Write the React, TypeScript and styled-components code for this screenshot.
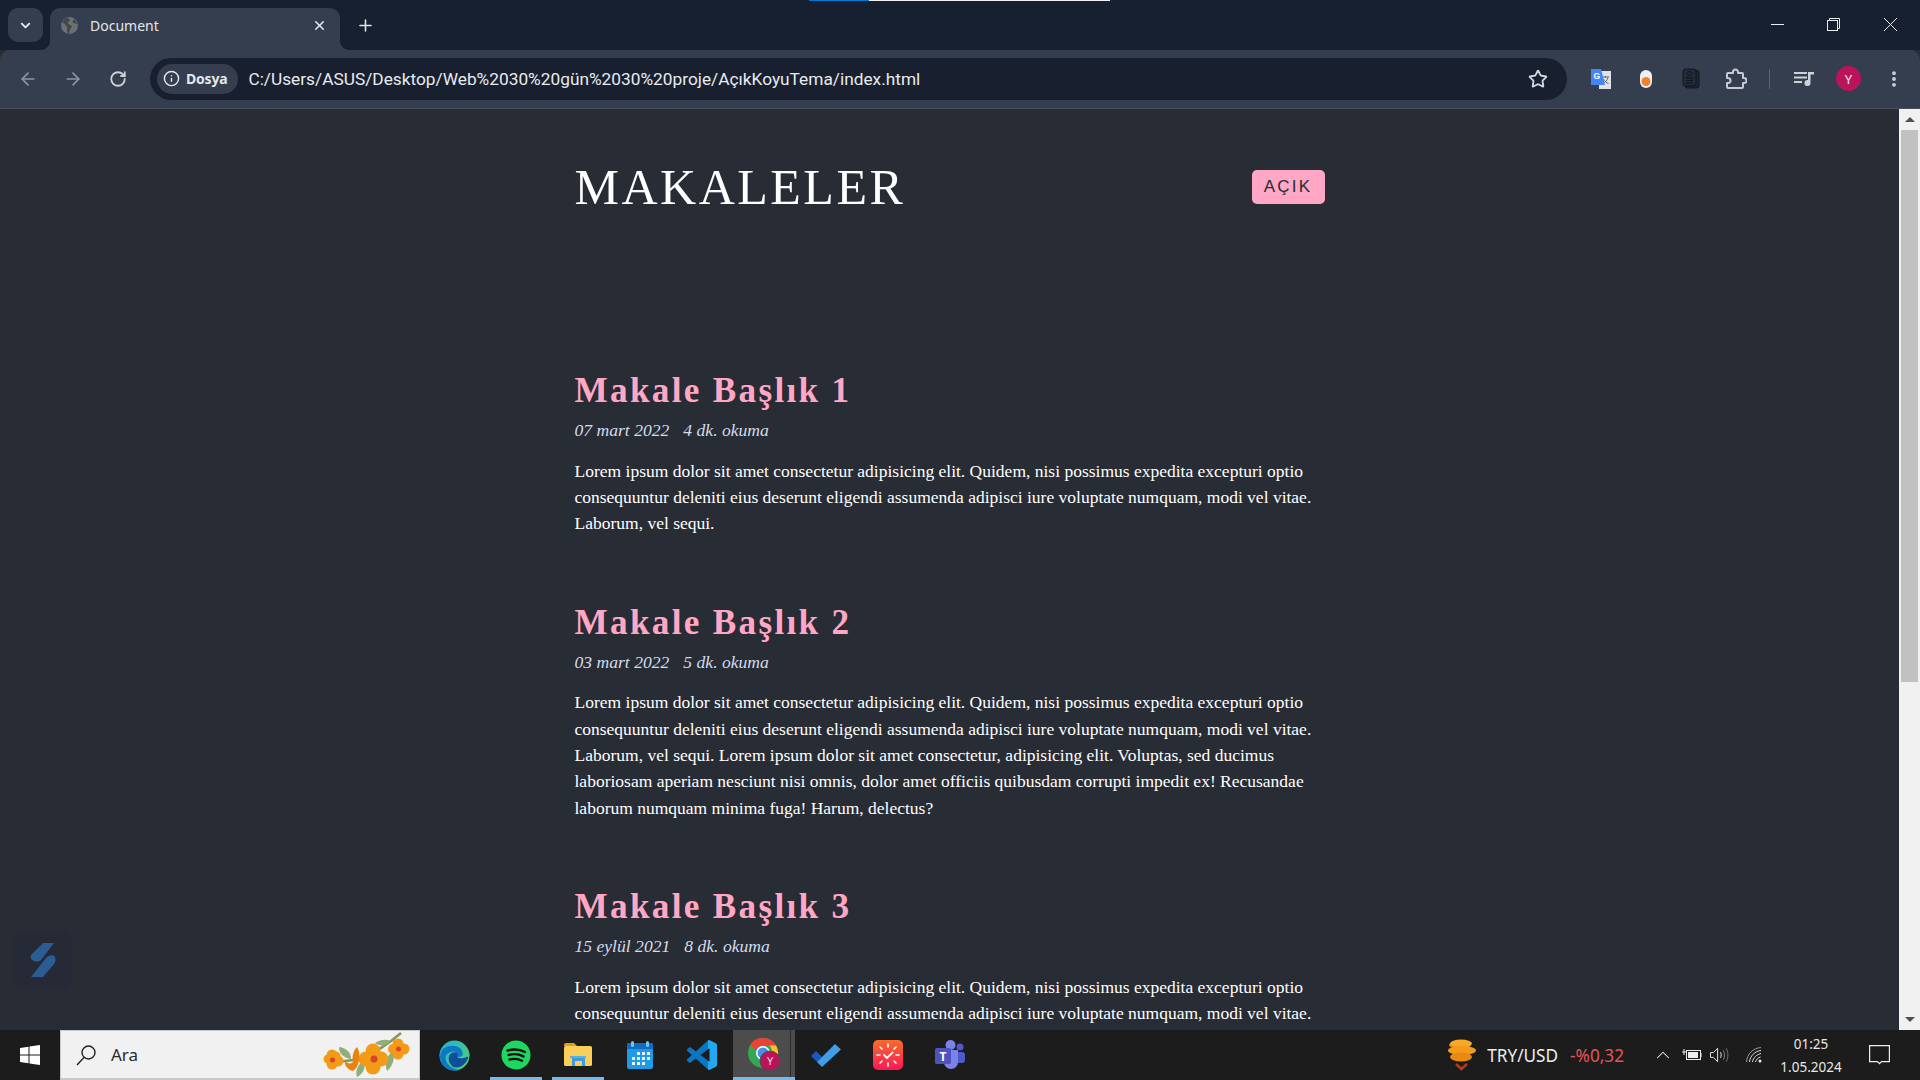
import React from "react";
import styled, { createGlobalStyle } from "styled-components";
import { ArrowLeft, ArrowRight, RotateCw, Star, Plus, X, ChevronDown, ChevronUp, Info, EllipsisVertical } from "lucide-react";

const GlobalStyle = createGlobalStyle`
  html, body { margin: 0; padding: 0; height: 100%; overflow: hidden; background: #282c35; }
  #root { height: 100%; }
  * { box-sizing: border-box; }
`;

const ui = `"Noto Sans", "Open Sans", sans-serif`;
const serif = `"Liberation Serif", "Times New Roman", serif`;

const Screen = styled.div`
  position: relative;
  display: flex;
  flex-direction: column;
  height: 1080px;
  overflow: hidden;
`;

const LoadBar = styled.div`
  position: absolute;
  top: 0;
  left: 809px;
  width: 301px;
  height: 1px;
  background: linear-gradient(90deg, #0078d4 0 60px, #f2f2f2 60px);
`;

const TabStrip = styled.div`
  display: flex;
  align-items: flex-start;
  height: 50px;
  flex: none;
  padding-top: 8px;
  background: #172030;
  font-family: ${ui};
`;

const TabSearch = styled.div`
  display: flex;
  align-items: center;
  justify-content: center;
  width: 35px;
  height: 34px;
  margin-left: 8px;
  border-radius: 10px;
  background: #353e4e;
  color: #e6e9ee;
`;

const Tab = styled.div`
  position: relative;
  display: flex;
  align-items: center;
  width: 290px;
  height: 42px;
  margin-left: 7px;
  padding: 0 13px 7px 11px;
  border-radius: 10px 10px 0 0;
  background: #353e4e;
  color: #e3e6ea;
  font-size: 14px;

  &::before, &::after {
    content: "";
    position: absolute;
    bottom: 0;
    width: 10px;
    height: 10px;
  }
  &::before { left: -10px; background: radial-gradient(circle at 0 0, transparent 10px, #353e4e 10.5px); }
  &::after { right: -10px; background: radial-gradient(circle at 100% 0, transparent 10px, #353e4e 10.5px); }
`;

const TabTitle = styled.span`
  flex: 1;
  margin-left: 12px;
`;

const NewTab = styled.div`
  display: flex;
  align-items: center;
  justify-content: center;
  width: 36px;
  height: 34px;
  margin-left: 7px;
  color: #dfe3e8;
`;

const Spacer = styled.div`
  flex: 1;
`;

const WindowButton = styled.div<{ $width: number }>`
  display: flex;
  align-items: center;
  justify-content: center;
  width: ${(p) => p.$width}px;
  height: 34px;
  margin-top: -1px;
  color: #e9ebee;
`;

const Toolbar = styled.div`
  display: flex;
  align-items: center;
  height: 59px;
  flex: none;
  padding: 0 4px 1px 5px;
  border-radius: 10px 10px 0 0;
  border-bottom: 1px solid #4b4f57;
  background: #353e4e;
  font-family: ${ui};
`;

const ToolSlot = styled.div<{ $muted?: boolean }>`
  display: flex;
  align-items: center;
  justify-content: center;
  width: 45px;
  height: 40px;
  flex: none;
  color: ${(p) => (p.$muted ? "#8d95a2" : "#cdd2da")};
`;

const Omnibox = styled.div`
  display: flex;
  align-items: center;
  flex: 1;
  height: 42px;
  margin: 0 11px 0 10px;
  padding: 0 19px 0 7px;
  border-radius: 21px;
  background: #18202f;
  color: #d5d8dd;
`;

const SiteChip = styled.div`
  display: flex;
  align-items: center;
  gap: 6px;
  height: 30px;
  padding: 0 11px 0 6px;
  border-radius: 15px;
  background: #353e4e;
  color: #e4e7eb;
  font-size: 14px;
  font-weight: 700;
  letter-spacing: -0.2px;
`;

const Url = styled.span`
  flex: 1;
  margin-left: 10px;
  color: #e8eaee;
  font-family: Roboto, "Noto Sans", sans-serif;
  font-size: 17.3px;
  white-space: nowrap;
`;

const ToolDivider = styled.div`
  width: 1px;
  height: 20px;
  margin: 0 11px;
  background: #5a6270;
`;

const Avatar = styled.div`
  display: flex;
  align-items: center;
  justify-content: center;
  width: 25px;
  height: 25px;
  border-radius: 50%;
  background: #b9135a;
  color: #f7e6ee;
  font-size: 13px;
`;

const Viewport = styled.div`
  display: flex;
  flex: 1;
  min-height: 0;
`;

const Page = styled.main`
  position: relative;
  flex: 1;
  overflow: hidden;
  background: #282c35;
  font-family: ${serif};
`;

const Container = styled.div`
  width: 750px;
  margin: 0 auto;
`;

const Header = styled.header`
  display: flex;
  align-items: center;
  justify-content: space-between;
  height: 155px;
  margin-bottom: 107px;
`;

const Title = styled.h1`
  margin: 0;
  color: #fff;
  font-size: 50px;
  font-weight: 400;
  letter-spacing: 2.5px;
`;

const ThemeButton = styled.button`
  width: 73px;
  height: 34px;
  padding: 0;
  border: none;
  border-radius: 5px;
  background: #ffa7c4;
  color: #282c35;
  font-family: "Liberation Sans", Arial, sans-serif;
  font-size: 17px;
  letter-spacing: 2.2px;
`;

const Article = styled.article`
  margin-bottom: 66px;
`;

const ArticleTitle = styled.h2`
  margin: 0 0 10px;
  color: #ffa7c4;
  font-size: 35.2px;
  font-weight: 700;
  line-height: 40px;
  letter-spacing: 2.3px;
`;

const Meta = styled.div`
  display: flex;
  gap: 14px;
  margin-bottom: 17px;
  color: #d3dcec;
  font-size: 17.6px;
  font-style: italic;
  line-height: 19.500px;
`;

const Body = styled.p`
  margin: 0;
  color: #fff;
  font-size: 17.5px;
  line-height: 26.4px;
`;

const FloatingBadge = styled.div`
  position: absolute;
  left: 13px;
  bottom: 40px;
  display: flex;
  align-items: center;
  justify-content: center;
  width: 60px;
  height: 60px;
  border-radius: 14px;
  background: #252a36;
`;

const ScrollTrack = styled.div`
  display: flex;
  flex-direction: column;
  align-items: center;
  width: 21px;
  flex: none;
  background: #f1f1f1;
`;

const ScrollArrow = styled.div<{ $down?: boolean }>`
  display: flex;
  align-items: center;
  justify-content: center;
  width: 100%;
  height: 21px;
  flex: none;
  &::before {
    content: "";
    border-left: 5px solid transparent;
    border-right: 5px solid transparent;
    ${(p) => (p.$down ? "border-top: 5px solid #505050;" : "border-bottom: 5px solid #505050;")}
  }
`;

const ScrollThumb = styled.div`
  width: 17px;
  height: 552px;
  background: #c1c1c1;
`;

const ScrollRest = styled.div`
  flex: 1;
`;

const Taskbar = styled.footer`
  display: flex;
  align-items: stretch;
  height: 50px;
  flex: none;
  background: #1c1c1c;
  font-family: ${ui};
`;

const StartButton = styled.div`
  display: flex;
  align-items: center;
  justify-content: center;
  width: 60px;
`;

const SearchBox = styled.div`
  display: flex;
  align-items: center;
  width: 360px;
  padding: 0 8px 0 14px;
  border: 1px solid #c8c8c8;
  border-bottom-width: 2px;
  background: #f1f1f1;
  color: #2a2a2a;
  font-size: 17px;
`;

const SearchLabel = styled.span`
  flex: 1;
  margin-left: 14px;
`;

const TaskIcons = styled.div`
  display: flex;
  margin-left: 3px;
`;

const TaskSlot = styled.div<{ $active?: boolean; $open?: boolean }>`
  position: relative;
  display: flex;
  align-items: center;
  justify-content: center;
  width: 62px;
  background: ${(p) => (p.$active ? "#4c4c4c" : "transparent")};

  &::after {
    content: "";
    display: ${(p) => (p.$open ? "block" : "none")};
    position: absolute;
    left: ${(p) => (p.$active ? "0" : "5px")};
    right: ${(p) => (p.$active ? "0" : "5px")};
    bottom: 0;
    height: 3px;
    background: #76b9ed;
  }
`;

const StackEdge = styled.div`
  position: absolute;
  top: 0;
  bottom: 0;
  right: 4px;
  width: 1px;
  background: #2a2a2a;
`;

const Tray = styled.div`
  display: flex;
  align-items: center;
  margin-left: auto;
  color: #f0f0f0;
`;

const Ticker = styled.span<{ $loss?: boolean }>`
  margin-left: ${(p) => (p.$loss ? "12px" : "10px")};
  margin-right: ${(p) => (p.$loss ? "28px" : "0")};
  color: ${(p) => (p.$loss ? "#e2555b" : "#ececec")};
  font-size: 17.2px;
`;

const TrayIcon = styled.div<{ $width: number }>`
  display: flex;
  align-items: center;
  justify-content: center;
  width: ${(p) => p.$width}px;
  height: 100%;
  flex: none;
`;

const Clock = styled.div`
  display: flex;
  flex-direction: column;
  align-items: center;
  gap: 3px;
  width: 66px;
  font-size: 13.5px;
  line-height: 20px;
  color: #e8e8e8;
  white-space: nowrap;
`;

const ShowDesktop = styled.div`
  width: 1px;
  margin: 0 5px 0 0;
  background: #7a7a7a;
`;

const lorem1 =
  "Lorem ipsum dolor sit amet consectetur adipisicing elit. Quidem, nisi possimus expedita excepturi optio consequuntur deleniti eius deserunt eligendi assumenda adipisci iure voluptate numquam, modi vel vitae. Laborum, vel sequi.";
const lorem2 =
  lorem1 +
  " Lorem ipsum dolor sit amet consectetur, adipisicing elit. Voluptas, sed ducimus laboriosam aperiam nesciunt nisi omnis, dolor amet officiis quibusdam corrupti impedit ex! Recusandae laborum numquam minima fuga! Harum, delectus?";

const articles = [
  { title: "Makale Başlık 1", date: "07 mart 2022", read: "4 dk. okuma", body: lorem1 },
  { title: "Makale Başlık 2", date: "03 mart 2022", read: "5 dk. okuma", body: lorem2 },
  { title: "Makale Başlık 3", date: "15 eylül 2021", read: "8 dk. okuma", body: lorem1 },
];

const GlobeIcon = () => (
  <svg width="17" height="17" viewBox="0 0 16 16">
    <circle cx="8" cy="8" r="8" fill="#6d7074" />
    <path d="M6 .4C4 1 2 2.6 1 5c1 1 2.5 1 3 2.4.3 1.2 1.6 1 1.8 2.4.2 1.4-.4 2.8.4 5.8l1.6.2C7.5 13 9.5 11 10 9.5 10.500 8 8 7 7 6.500 6 6 6.500 4.500 8 4c1-.500.200-2.500-2-3.600zM12 2c-1 1-1.600 2.500-.5 3.500 1 .8 2.500.5 3.800 1.500C15 5 14 3.200 12 2z" fill="#43474d" />
  </svg>
);

const MinimizeIcon = () => (
  <svg width="13" height="13" viewBox="0 0 13 13" stroke="currentColor" strokeWidth="1">
    <path d="M0 6.500h13" />
  </svg>
);

const RestoreIcon = () => (
  <svg width="13" height="13" viewBox="0 0 13 13" fill="none" stroke="currentColor" strokeWidth="1">
    <rect x="0.5" y="2.500" width="10" height="10" />
    <path d="M2.500 2.500V.5h10v10h-2" />
  </svg>
);

const CloseIcon = () => (
  <svg width="13" height="13" viewBox="0 0 13 13" stroke="currentColor" strokeWidth="1" fill="none">
    <path d="M0 0l13 13M13 0L0 13" />
  </svg>
);

const TranslateIcon = () => (
  <svg width="22" height="22" viewBox="0 0 22 22">
    <path d="M9 3h12v18H9z" fill="#dfe3e8" />
    <path d="M12 9h7M15.500 8v1.500M18 9.500c-.800 3-3 5-5.500 6M13.500 11c.800 2 2.500 3.500 5 4.500" stroke="#5f6670" strokeWidth="1" fill="none" />
    <path d="M1 1h10l4 16H1z" fill="#4285f4" />
    <text x="3.500" y="11" fontSize="8.500" fontWeight="700" fill="#fff" fontFamily="Liberation Sans, sans-serif">G</text>
  </svg>
);

const ToggleIcon = () => (
  <svg width="14" height="20" viewBox="0 0 14 20">
    <rect x="1" y="1" width="12" height="18" rx="6" fill="#eef0f2" />
    <circle cx="7" cy="12.500" r="4.500" fill="#f3812a" />
  </svg>
);

const NotebookIcon = () => (
  <svg width="18" height="21" viewBox="0 0 18 21">
    <rect x="3" y="2" width="14" height="18" rx="2.500" fill="#1d2430" stroke="#12161e" />
    <rect x="1" y="1" width="13" height="17" rx="2.500" fill="#232a38" stroke="#12161e" />
    <circle cx="7.500" cy="5.500" r="2" fill="none" stroke="#10141c" />
    <path d="M4 10h7M4 12.500h7M4 15h7" stroke="#10141c" />
  </svg>
);

const ExtensionIcon = () => (
  <svg width="22" height="22" viewBox="0 0 22 22" fill="none" stroke="#c5cad3" strokeWidth="2" strokeLinejoin="round">
    <path d="M3 5h5V4a2.500 2.500 0 0 1 5 0v1h4a1 1 0 0 1 1 1v4h1a2.500 2.500 0 0 1 0 5h-1v4a1 1 0 0 1-1 1H3a1 1 0 0 1-1-1v-4h1a2.500 2.500 0 0 0 0-5H2V6a1 1 0 0 1 1-1z" />
  </svg>
);

const QueueIcon = () => (
  <svg width="20" height="16" viewBox="0 0 20 16" fill="#cdd2da">
    <path d="M0 1h13v2H0zM0 5.500h13v2H0zM0 10h8v2H0z" />
    <path d="M14 1h6v2.500h-3.500V12a3 3 0 1 1-2.500-2.900z" />
  </svg>
);

const WindowsIcon = () => (
  <svg width="20" height="20" viewBox="0 0 20 20" fill="#fff">
    <path d="M0 3l8.500-1.200v7.700H0zM9.500 1.600L20 0v9.500H9.500zM0 10.500h8.500v7.700L0 17zM9.500 10.500H20V20L9.500 18.400z" />
  </svg>
);

const LensIcon = () => (
  <svg width="22" height="22" viewBox="0 0 22 22" fill="none" stroke="#222" strokeWidth="1.400">
    <circle cx="13.500" cy="8.500" r="6.500" />
    <path d="M9 13.500L2 21" />
  </svg>
);

const FlowersIcon = () => (
  <svg width="88" height="48" viewBox="0 0 88 48">
    <path d="M8 30C30 32 50 26 78 2" stroke="#7d9a62" strokeWidth="2.500" fill="none" />
    <path d="M16 16c8 1 12 6 12 12-7-1-12-5-12-12zM34 46c-2-7 1-13 7-16 2 7-1 13-7 16zM52 12c6-4 11-4 16-2-5 5-11 6-16 2zM64 40c-3-8 0-16 6-20 2 7 0 15-6 20z" fill="#8fae78" />
    <g fill="#f39a16">
      <circle cx="9" cy="24" r="5.500" /><circle cx="15" cy="30" r="5.500" /><circle cx="9" cy="33" r="5.500" /><circle cx="5" cy="28" r="4.500" /><circle cx="13" cy="25" r="4.500" />
      <circle cx="50" cy="20" r="7.500" /><circle cx="58" cy="28" r="7.500" /><circle cx="50" cy="36" r="7.500" /><circle cx="43" cy="28" r="7.500" />
      <circle cx="75" cy="13" r="5.500" /><circle cx="81" cy="18" r="5.500" /><circle cx="75" cy="23" r="5.500" /><circle cx="70" cy="18" r="5" />
    </g>
    <path d="M30 40c-5-1-9-6-8-10 3 3 6 3 8 1-1-5 0-11 4-15 4 6 3 20-4 24z" fill="#e9830e" />
    <circle cx="9.500" cy="29" r="2.500" fill="#d9442c" />
    <circle cx="51" cy="28" r="3.500" fill="#d9442c" />
    <circle cx="75.500" cy="18" r="2.500" fill="#d9442c" />
  </svg>
);

const EdgeIcon = () => (
  <svg width="31" height="31" viewBox="0 0 32 32">
    <defs>
      <linearGradient id="edgeTop" x1="0" y1="0" x2="1" y2="1">
        <stop offset="0" stopColor="#1fb2d6" />
        <stop offset="1" stopColor="#58d36a" />
      </linearGradient>
    </defs>
    <circle cx="16" cy="16" r="15.500" fill="url(#edgeTop)" />
    <path d="M1 18C1 9 8 6 14 6c6 0 11 4 10.500 9-.2 2-3 3-6 2.500 1-3-1-6-5-5.500C8 12.600 5 17 8 23c2 4 8 8 14 8C12 34 2 28 1 18z" fill="#0f76c8" />
    <path d="M10 19c0-4 3-6 6-6 3 0 4 2 2.500 4.500 2 1.500 6 2 10 0 1-.5 2-.5 1.500 1-2 6-7 10-13 10-4-1-7-5-7-9.500z" fill="#0d4f9a" />
  </svg>
);

const SpotifyIcon = () => (
  <svg width="30" height="30" viewBox="0 0 30 30">
    <circle cx="15" cy="15" r="14.500" fill="#1ed760" />
    <path d="M6.500 10.500c6-1.700 12.500-1.200 17.500 1.500M7.500 15c5-1.400 10.500-1 15 1.400M8.500 19.500c4.500-1.100 9-.8 12.500 1.200" stroke="#111" strokeWidth="2.400" strokeLinecap="round" fill="none" />
  </svg>
);

const FolderIcon = () => (
  <svg width="28" height="24" viewBox="0 0 28 24">
    <path d="M0 2a2 2 0 0 1 2-2h8l3 3H0z" fill="#e0a013" />
    <rect y="3" width="28" height="20" rx="1.500" fill="#f9cf5a" />
    <path d="M8 14h13v9h-3v-5h-7v5H8z" fill="#3f9ae0" />
    <path d="M6 13h16v2H6z" fill="#57aef0" />
  </svg>
);

const CalendarIcon = () => (
  <svg width="26" height="28" viewBox="0 0 26 28">
    <rect y="2" width="26" height="26" rx="2" fill="#1e9ae8" />
    <path d="M0 4a2 2 0 0 1 2-2h22a2 2 0 0 1 2 2v4H0z" fill="#0f6cc0" />
    <rect x="4" y="0" width="3" height="6" rx="1.500" fill="#6cc8f5" />
    <rect x="19" y="0" width="3" height="6" rx="1.500" fill="#6cc8f5" />
    <g fill="#e8f5fd">
      <rect x="10" y="11" width="3" height="3" /><rect x="15" y="11" width="3" height="3" /><rect x="20" y="11" width="3" height="3" />
      <rect x="5" y="16" width="3" height="3" /><rect x="10" y="16" width="3" height="3" /><rect x="15" y="16" width="3" height="3" /><rect x="20" y="16" width="3" height="3" />
      <rect x="5" y="21" width="3" height="3" /><rect x="10" y="21" width="3" height="3" /><rect x="15" y="21" width="3" height="3" />
    </g>
  </svg>
);

const VsCodeIcon = () => (
  <svg width="30" height="30" viewBox="0 0 24 24">
    <defs>
      <linearGradient id="vsBlue" x1="0" y1="0" x2="1" y2="0">
        <stop offset="0.69" stopColor="#0b77c2" />
        <stop offset="0.7" stopColor="#22a7f0" />
      </linearGradient>
    </defs>
    <path fill="url(#vsBlue)" d="M23.15 2.587L18.21.21a1.494 1.494 0 0 0-1.705.29l-9.46 8.63-4.12-3.128a.999.999 0 0 0-1.276.057L.327 7.261A1 1 0 0 0 .326 8.74L3.899 12 .326 15.26a1 1 0 0 0 .001 1.479L1.65 17.94a.999.999 0 0 0 1.276.057l4.12-3.128 9.46 8.63a1.492 1.492 0 0 0 1.704.29l4.942-2.377A1.5 1.5 0 0 0 24 20.06V3.939a1.5 1.500 0 0 0-.85-1.352zm-5.146 14.861L10.826 12l7.178-5.448v10.896z" />
  </svg>
);

const ChromeProfileIcon = () => (
  <svg width="34" height="34" viewBox="-1 0 34 34">
    <circle cx="15" cy="15" r="15" fill="#34a853" />
    <path d="M15 0a15 15 0 0 1 13 7.500H15a7.500 7.500 0 0 0-7 4.500L2 7A15 15 0 0 1 15 0z" fill="#ea4335" />
    <path d="M28 7.500A15 15 0 0 1 15 30l6.500-11.500a7.500 7.500 0 0 0 0-11z" fill="#fbc02d" />
    <circle cx="15" cy="15" r="7" fill="#fff" />
    <circle cx="15" cy="15" r="5.500" fill="#4a8cf0" />
    <circle cx="22" cy="23" r="10" fill="#b9135a" stroke="#4c4c4c" strokeWidth="1" />
    <text x="22" y="27" textAnchor="middle" fontSize="11" fill="#f3d5e3" fontFamily="Noto Sans, sans-serif">Y</text>
  </svg>
);

const TodoIcon = () => (
  <svg width="30" height="24" viewBox="0 0 30 24">
    <path d="M0 13l5-5 6 6-5 5z" fill="#185abd" />
    <path d="M6 19L24 1l6 5.500L11 24z" fill="#3f9ee8" />
  </svg>
);

const TickIcon = () => (
  <svg width="30" height="30" viewBox="0 0 30 30">
    <defs>
      <linearGradient id="tickBg" x1="0" y1="0" x2="0" y2="1">
        <stop offset="0" stopColor="#fb6a2c" />
        <stop offset="1" stopColor="#fb1858" />
      </linearGradient>
    </defs>
    <rect width="30" height="30" rx="5" fill="url(#tickBg)" />
    <path d="M15 4v3M15 23v3M4 15h3M23 15h3M7 7l2 2M23 7l-2 2M7 23l2-2M23 23l-2-2" stroke="#fff" strokeWidth="1.600" strokeLinecap="round" />
    <path d="M10.500 14.500l3.500 3.500 6-6" stroke="#fff" strokeWidth="1.800" fill="none" />
  </svg>
);

const TeamsIcon = () => (
  <svg width="30" height="30" viewBox="0 0 30 30">
    <circle cx="25" cy="7" r="3.500" fill="#5059c9" />
    <rect x="20" y="12" width="10" height="11" rx="3" fill="#5059c9" />
    <circle cx="15.500" cy="5" r="5" fill="#7b83eb" />
    <path d="M9 10h14v12a7 7 0 0 1-14 0z" fill="#7b83eb" />
    <rect y="8" width="16" height="16" rx="1.500" fill="#4b53bc" />
    <text x="8" y="21" textAnchor="middle" fontSize="12" fontWeight="700" fill="#fff" fontFamily="Noto Sans, sans-serif">T</text>
  </svg>
);

const CoinsIcon = () => (
  <svg width="30" height="32" viewBox="0 0 30 32">
    <path d="M2 6a11 4 0 0 1 22 0 11 4 0 0 1-22 0z" fill="#e98a12" />
    <ellipse cx="14" cy="4.500" rx="11" ry="4" fill="#f8a827" />
    <ellipse cx="15" cy="11.500" rx="14" ry="4.500" fill="#f49a1c" />
    <ellipse cx="14" cy="18" rx="11" ry="4.500" fill="#e98a12" />
    <path d="M9 25l5.500 5 5.500-5" stroke="#b7391a" strokeWidth="2.500" fill="none" />
  </svg>
);

const BatteryIcon = () => (
  <svg width="20" height="12" viewBox="0 0 20 12" fill="none" stroke="#eee" strokeWidth="1">
    <rect x="4.500" y="1.500" width="14" height="9" />
    <rect x="6" y="3" width="10" height="6" fill="#eee" stroke="none" />
    <path d="M19 4v4M0 3h4M2 0v3M2 3v3" />
  </svg>
);

const VolumeIcon = () => (
  <svg width="21" height="18" viewBox="0 0 21 18" fill="none" stroke="#eee" strokeWidth="1">
    <path d="M.5 6.500h3L8 2v14l-4.500-4.500h-3z" />
    <path d="M11 6c1 2 1 4 0 6" />
    <path d="M14 4c1.600 3 1.600 7 0 10" stroke="#888" />
    <path d="M17 2c2.400 4 2.400 10 0 14" stroke="#777" />
  </svg>
);

const WifiIcon = () => (
  <svg width="16" height="16" viewBox="0 0 16 16" fill="none" stroke="#ddd" strokeWidth="1">
    <path d="M.5 15C1 7 7 1 15 .5" stroke="#999" />
    <path d="M3.500 15C4 9 9 4 15 3.500" />
    <path d="M6.500 15c.5-4 4-7.500 8.500-8.500" />
    <path d="M9.500 15c.5-2 2.500-4.500 5-5" />
    <circle cx="14" cy="14" r="1.500" fill="#eee" stroke="none" />
  </svg>
);

const NotificationIcon = () => (
  <svg width="21" height="20" viewBox="0 0 21 20" fill="none" stroke="#eee" strokeWidth="1.200">
    <path d="M.6.6h19.800v16H12.500l-2 2-2-2H.6z" />
  </svg>
);

const BadgeLogo = () => (
  <svg width="26" height="34" viewBox="0 0 26 34" fill="#2b5c92">
    <path d="M13 0h11L11 17c-2 2-5 2-7 1-3-1-4-4-3-6z" />
    <path d="M25 14c1 3 .5 5-1 7L13 34H1l15-19c2-3 8-4 9-1z" />
  </svg>
);

export default function App() {
  return (
    <>
      <GlobalStyle />
      <Screen>
        <LoadBar />
        <TabStrip>
          <TabSearch><ChevronDown size={15} strokeWidth={3} /></TabSearch>
          <Tab>
            <GlobeIcon />
            <TabTitle>Document</TabTitle>
            <X size={15} strokeWidth={2.5} />
          </Tab>
          <NewTab><Plus size={19} strokeWidth={2} /></NewTab>
          <Spacer />
          <WindowButton $width={56}><MinimizeIcon /></WindowButton>
          <WindowButton $width={56}><RestoreIcon /></WindowButton>
          <WindowButton $width={59}><CloseIcon /></WindowButton>
        </TabStrip>

        <Toolbar>
          <ToolSlot $muted><ArrowLeft size={20} strokeWidth={2} /></ToolSlot>
          <ToolSlot $muted><ArrowRight size={20} strokeWidth={2} /></ToolSlot>
          <ToolSlot><RotateCw size={18} strokeWidth={2.4} /></ToolSlot>
          <Omnibox>
            <SiteChip>
              <Info size={17} strokeWidth={2} />
              Dosya
            </SiteChip>
            <Url>C:/Users/ASUS/Desktop/Web%2030%20gün%2030%20proje/AçıkKoyuTema/index.html</Url>
            <Star size={20} strokeWidth={2.2} />
          </Omnibox>
          <ToolSlot><TranslateIcon /></ToolSlot>
          <ToolSlot><ToggleIcon /></ToolSlot>
          <ToolSlot><NotebookIcon /></ToolSlot>
          <ToolSlot><ExtensionIcon /></ToolSlot>
          <ToolDivider />
          <ToolSlot><QueueIcon /></ToolSlot>
          <ToolSlot><Avatar>Y</Avatar></ToolSlot>
          <ToolSlot><EllipsisVertical size={20} strokeWidth={2.6} /></ToolSlot>
        </Toolbar>

        <Viewport>
          <Page>
            <Container>
              <Header>
                <Title>MAKALELER</Title>
                <ThemeButton>AÇIK</ThemeButton>
              </Header>
              {articles.map((article) => (
                <Article key={article.title}>
                  <ArticleTitle>{article.title}</ArticleTitle>
                  <Meta>
                    <span>{article.date}</span>
                    <span>{article.read}</span>
                  </Meta>
                  <Body>{article.body}</Body>
                </Article>
              ))}
            </Container>
            <FloatingBadge><BadgeLogo /></FloatingBadge>
          </Page>
          <ScrollTrack>
            <ScrollArrow />
            <ScrollThumb />
            <ScrollRest />
            <ScrollArrow $down />
          </ScrollTrack>
        </Viewport>

        <Taskbar>
          <StartButton><WindowsIcon /></StartButton>
          <SearchBox>
            <LensIcon />
            <SearchLabel>Ara</SearchLabel>
            <FlowersIcon />
          </SearchBox>
          <TaskIcons>
            <TaskSlot><EdgeIcon /></TaskSlot>
            <TaskSlot $open><SpotifyIcon /></TaskSlot>
            <TaskSlot $open><FolderIcon /></TaskSlot>
            <TaskSlot><CalendarIcon /></TaskSlot>
            <TaskSlot><VsCodeIcon /></TaskSlot>
            <TaskSlot $active $open><ChromeProfileIcon /><StackEdge /></TaskSlot>
            <TaskSlot><TodoIcon /></TaskSlot>
            <TaskSlot><TickIcon /></TaskSlot>
            <TaskSlot><TeamsIcon /></TaskSlot>
          </TaskIcons>
          <Tray>
            <CoinsIcon />
            <Ticker>TRY/USD</Ticker>
            <Ticker $loss>-%0,32</Ticker>
            <TrayIcon $width={22}><ChevronUp size={26} strokeWidth={1.1} /></TrayIcon>
            <TrayIcon $width={36}><BatteryIcon /></TrayIcon>
            <TrayIcon $width={20}><VolumeIcon /></TrayIcon>
            <TrayIcon $width={48}><WifiIcon /></TrayIcon>
            <Clock><span>01:25</span><span>1.05.2024</span></Clock>
            <TrayIcon $width={70}><NotificationIcon /></TrayIcon>
            <ShowDesktop />
          </Tray>
        </Taskbar>
      </Screen>
    </>
  );
}
